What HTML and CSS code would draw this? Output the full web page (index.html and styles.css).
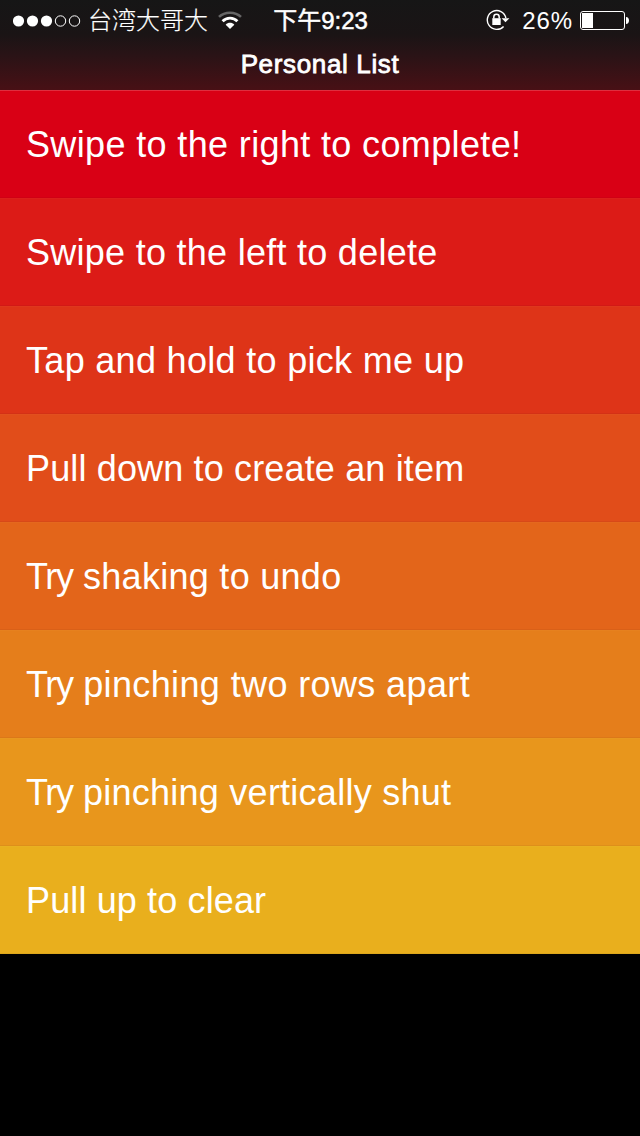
FILE: index.html
```html
<!DOCTYPE html>
<html lang="zh-Hant">
<head>
	<meta charset="UTF-8">
	<meta name="viewport" content="width=device-width, initial-scale=1">
	<title>Personal List</title>
	<link rel="stylesheet" href="styles.css">
</head>
<body>
	<header class="header">
		<div class="status">
			<div class="status-left">
				<svg class="signal" width="68" height="12" viewBox="0 0 68 12">
					<g fill="#fff">
						<circle cx="5.5" cy="6" r="5.6"/>
						<circle cx="19.5" cy="6" r="5.6"/>
						<circle cx="33.5" cy="6" r="5.6"/>
					</g>
					<g fill="none" stroke="#fff" stroke-width="1">
						<circle cx="47.5" cy="6" r="5.2"/>
						<circle cx="61.5" cy="6" r="5.2"/>
					</g>
				</svg>
				<span class="carrier">台湾大哥大</span>
				<svg class="wifi" width="24" height="18" viewBox="0 0 24 18">
					<path d="M1 5.9c5.8-5.6 16.2-5.6 22 0" fill="none" stroke="#666" stroke-width="2.6"/>
					<path d="M4.6 10.2c4-4.2 10.8-4.2 14.8 0" fill="none" stroke="#fff" stroke-width="2.8"/>
					<path d="M12 18l-4.3-4.3c2.2-2.6 6.4-2.6 8.6 0z" fill="#fff"/>
				</svg>
			</div>
			<span class="time">下午9:23</span>
			<div class="status-right">
				<svg class="lock" width="24" height="22" viewBox="0 0 24 22">
					<path d="M17.6 17.4a9.4 9.4 0 1 1 2.3-8.4" fill="none" stroke="#fff" stroke-width="1.4"/>
					<path d="M15.6 9.2h7.8l-3.9 4z" fill="#fff"/>
					<path d="M6.3 9.2h8.4v6.8h-8.4z" fill="#fff"/>
					<path d="M7.8 9.6v-1.6a2.7 2.7 0 0 1 5.4 0v1.6" fill="none" stroke="#fff" stroke-width="1.5"/>
				</svg>
				<span class="percent">26%</span>
				<svg class="battery" width="49" height="19" viewBox="0 0 49 19">
					<rect x=".5" y=".5" width="44" height="18" rx="2.5" fill="none" stroke="#fff"/>
					<rect x="2" y="2" width="11" height="15" fill="#fff"/>
					<path d="M46 6c4 0 4 7 0 7z" fill="#fff"/>
				</svg>
			</div>
		</div>
		<h1 class="title">Personal List</h1>
	</header>
	<ul class="list">
		<li class="item item-1">Swipe to the right to complete!</li>
		<li class="item item-2">Swipe to the left to delete</li>
		<li class="item item-3">Tap and hold to pick me up</li>
		<li class="item item-4">Pull down to create an item</li>
		<li class="item item-5"><span class="tight">Try</span> shaking to undo</li>
		<li class="item item-6"><span class="tight">Try</span> pinching two rows apart</li>
		<li class="item item-7"><span class="tight">Try</span> pinching vertically shut</li>
		<li class="item item-8">Pull up to clear</li>
	</ul>
</body>
</html>
```
FILE: styles.css
```css
body {
	margin: 0;
	min-height: 100vh;
	background: #000;
	color: #fff;
	font-family: "Liberation Sans", "Noto Sans CJK SC", sans-serif;
}

.header {
	height: 90px;
	background: linear-gradient(#161616 0, #1a1415 38%, #2a1316 62%, #481015 100%);
}

/* 状态栏 */
.status {
	display: grid;
	grid-template-columns: 1fr auto 1fr;
	align-items: center;
	height: 41px;
	padding: 0 11px 0 13px;
	font-size: 24px;
	line-height: 42px;
}

.status-left,
.status-right {
	display: flex;
	align-items: center;
}

.status-right {
	justify-content: flex-end;
}

.carrier {
	margin: 0 10px 0 7px;
	font-weight: 300;
	-webkit-text-stroke: .2px #fff;
}

.wifi,
.lock,
.battery {
	margin-bottom: 2px;
}

.time {
	margin-left: -1px;
	-webkit-text-stroke: .5px #fff;
}

.percent {
	margin: 0 7px 0 12px;
	letter-spacing: .9px;
}

.title {
	margin: 0;
	font-size: 26px;
	font-weight: normal;
	line-height: 46px;
	text-align: center;
	letter-spacing: .65px;
	-webkit-text-stroke: .8px #fff;
}

/* 列表 */
.list {
	margin: 0;
	padding: 0;
	list-style: none;
}

.item {
	box-sizing: border-box;
	height: 108px;
	padding-left: 26px;
	border-top: 1px solid rgba(255, 255, 255, .02);
	border-bottom: 1px solid rgba(0, 0, 0, .04);
	font-size: 36px;
	line-height: 108px;
}

.item-1 {
	background: #d90015;
	border-top-color: rgba(255, 255, 255, .18);
	letter-spacing: .36px;
}

.item-2 {
	background: #dc1b17;
	letter-spacing: .27px;
}

.item-3 {
	background: #de3418;
	letter-spacing: .31px;
}

.item-4 {
	background: #e14d1a;
	letter-spacing: .15px;
}

.item-5 {
	background: #e3651a;
	letter-spacing: .28px;
}

.item-6 {
	background: #e57e1b;
	letter-spacing: .38px;
}

.item-7 {
	background: #e8961c;
	letter-spacing: .25px;
}

.item-8 {
	background: #e9af1d;
	letter-spacing: .13px;
}

.tight {
	letter-spacing: -1.3px;
}
```
